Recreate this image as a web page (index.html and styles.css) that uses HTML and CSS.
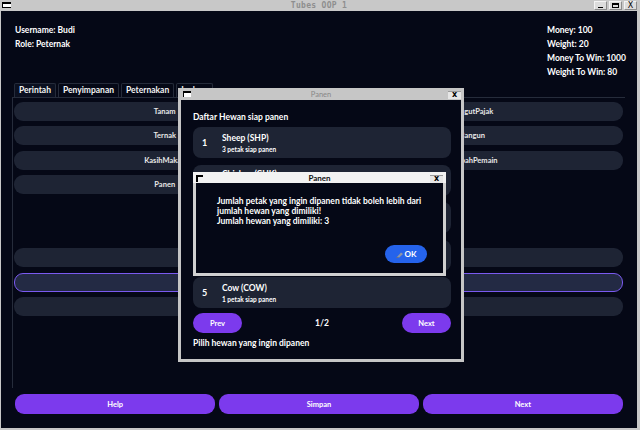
FILE: index.html
```html
<!DOCTYPE html>
<html>
<head>
<meta charset="utf-8">
<link rel="stylesheet" href="styles.css">
</head>
<body>
<div class="window">
  <div class="titlebar">
    <span class="wicon"></span>
    <span class="wtitle">Tubes OOP 1</span>
    <div class="wbtns">
      <span class="wb"><span class="g-min"></span></span>
      <span class="wb"><span class="g-max"></span></span>
      <span class="wb g-x">X</span>
    </div>
  </div>
  <div class="main">
    <header class="info">
      <div class="info-col">
        <div>Username: Budi</div>
        <div>Role: Peternak</div>
      </div>
      <div class="info-col">
        <div>Money: 100</div>
        <div>Weight: 20</div>
        <div>Money To Win: 1000</div>
        <div>Weight To Win: 80</div>
      </div>
    </header>
    <nav class="tabs">
      <div class="tab active">Perintah</div>
      <div class="tab">Penyimpanan</div>
      <div class="tab">Peternakan</div>
      <div class="tab">Ladang</div>
    </nav>
    <section class="panel">
      <div class="cmd c1 r1">Tanam</div>
      <div class="cmd c1 r2">Ternak</div>
      <div class="cmd c1 r3">KasihMakan</div>
      <div class="cmd c1 r4">Panen</div>
      <div class="cmd c2 r1">PungutPajak</div>
      <div class="cmd c2 r2">Bangun</div>
      <div class="cmd c2 r3">TambahPemain</div>
      <div class="cmd wide r7"></div>
      <div class="cmd wide r8 focus"></div>
      <div class="cmd wide r9"></div>
    </section>
    <footer class="actions">
      <button class="btn">Help</button>
      <button class="btn">Simpan</button>
      <button class="btn">Next</button>
    </footer>
  </div>

  <div class="dialog outer">
    <div class="dtitle">
      <span class="dicon"></span>
      <span>Panen</span>
      <span class="dclose">x</span>
    </div>
    <div class="dbody">
      <div class="dhead">Daftar Hewan siap panen</div>
      <div class="animals">
        <div class="animal"><span class="num">1</span><div><div class="aname">Sheep (SHP)</div><div class="asub">3 petak siap panen</div></div></div>
        <div class="animal top"><div class="aname peek">Chicken (CHK)</div></div>
        <div class="animal"></div>
        <div class="animal"></div>
        <div class="animal"><span class="num">5</span><div><div class="aname">Cow (COW)</div><div class="asub">1 petak siap panen</div></div></div>
      </div>
      <div class="pager">
        <button class="pbtn">Prev</button>
        <span>1/2</span>
        <button class="pbtn">Next</button>
      </div>
      <div class="hint">Pilih hewan yang ingin dipanen</div>
    </div>
  </div>

  <div class="dialog inner">
    <div class="ititle">
      <span class="icorner"></span>
      <span>Panen</span>
      <span class="iclose">x</span>
    </div>
    <div class="ibody">
      <p class="msg">Jumlah petak yang ingin dipanen tidak boleh lebih dari<br>jumlah hewan yang dimiliki!<br>Jumlah hewan yang dimiliki: 3</p>
      <div class="okrow">
        <button class="ok"><svg width="8" height="7" viewBox="0 0 8 7"><path d="M1 6 L5 1.5 L7 3 L3.2 6.5 Z" fill="#8d96a6"/><path d="M0.5 6.5 L2.5 6.5" stroke="#6b7280" stroke-width="1"/></svg>OK</button>
      </div>
    </div>
  </div>
</div>
</body>
</html>
```

FILE: styles.css
```css
* { box-sizing: border-box; }
html, body { margin: 0; padding: 0; }
body {
  background: #c8c8c8;
  font-family: Lato, "Noto Sans", "DejaVu Sans", sans-serif;
  color: #fff;
}
.window {
  position: relative;
  width: 640px;
  height: 430px;
  background: #c8c8c8;
  padding: 0 3px 2px 1px;
  display: flex;
  flex-direction: column;
}
.titlebar {
  height: 11px;
  position: relative;
  display: flex;
  align-items: center;
  justify-content: center;
}
.wicon {
  position: absolute;
  left: 1px;
  top: 2px;
  width: 9px;
  height: 6px;
  background: #fff;
  border-top: 2px solid #000;
  border-left: 1px solid #000;
  border-bottom: 1px solid #000;
}
.wtitle {
  font-family: "DejaVu Sans Mono", monospace;
  font-size: 8px;
  font-weight: bold;
  color: #8e8e8e;
  letter-spacing: 0.3px;
}
.wbtns {
  position: absolute;
  right: 0;
  top: 1px;
  display: flex;
  gap: 2px;
}
.wb {
  width: 13px;
  height: 9px;
  background: #dcdcdc;
  border: 1px solid;
  border-color: #f4f4f4 #8c8c8c #8c8c8c #f4f4f4;
  display: flex;
  align-items: center;
  justify-content: center;
  font-family: "DejaVu Sans", sans-serif;
  font-size: 8px;
  line-height: 1;
  color: #000;
}
.g-min { width: 5px; height: 1px; background: #000; margin-top: 4px; }
.g-max { width: 7px; height: 5px; border: 1px solid #000; border-top-width: 2px; }
.g-x { font-size: 8px; }

.main {
  flex: 1;
  background: #050816;
  display: flex;
  flex-direction: column;
  padding: 12px 12px 14px 11px;
}
.info {
  display: grid;
  grid-template-columns: 1fr 78px;
  padding-left: 3px;
  font-size: 8.5px;
  font-weight: bold;
  line-height: 14px;
  white-space: nowrap;
}
.tabs {
  margin-top: 4px;
  margin-left: 2px;
  display: flex;
  gap: 2px;
  height: 14px;
}
.tab {
  border: 1px solid #252b3a;
  border-bottom: none;
  border-radius: 2px 2px 0 0;
  padding: 0 4px;
  font-size: 8.5px;
  font-weight: bold;
  line-height: 13px;
  color: #f2f2f2;
}
.tab.active { background: #0b1020; }

.panel {
  flex: 1;
  border-top: 1px solid #262c3b;
  border-left: 1px solid #262c3b;
  padding: 4px 2px 0 1px;
  display: grid;
  grid-template-columns: 1fr 1fr;
  column-gap: 6px;
  grid-template-rows: repeat(9, 19px);
  row-gap: 5.4px;
  align-content: start;
}
.cmd {
  background: #1e2434;
  border-radius: 9px;
  font-size: 7.5px;
  font-weight: bold;
  color: #e8e8e8;
  display: flex;
  align-items: center;
  justify-content: center;
}
.c1 { grid-column: 1; }
.c2 { grid-column: 2; }
.wide { grid-column: 1 / 3; }
.r1 { grid-row: 1; } .r2 { grid-row: 2; } .r3 { grid-row: 3; } .r4 { grid-row: 4; }
.r7 { grid-row: 7; } .r8 { grid-row: 8; } .r9 { grid-row: 9; }
.cmd.focus { background: #232a44; border: 1px solid #7a5af0; }

.actions {
  margin: 6px 2px 0 3px;
  display: grid;
  grid-template-columns: 1fr 1fr 1fr;
  gap: 3.5px;
  height: 20px;
}
.btn, .pbtn {
  border: none;
  background: #7c3aed;
  color: #fff;
  font-family: inherit;
  font-size: 7.5px;
  font-weight: bold;
  border-radius: 9px;
  padding: 0;
}

.dialog { position: absolute; display: flex; flex-direction: column; }
.outer {
  left: 178px;
  top: 88px;
  width: 286px;
  height: 274px;
  background: #c6c6c6;
  padding: 0 3px 3px 3px;
}
.dtitle {
  height: 12px;
  position: relative;
  display: flex;
  align-items: center;
  justify-content: center;
  font-size: 7.5px;
  color: #888;
}
.dicon {
  position: absolute;
  left: 2px;
  top: 3px;
  width: 8px;
  height: 6px;
  background: #fff;
  border-top: 2px solid #000;
  border-left: 1px solid #000;
}
.dclose, .iclose {
  position: absolute;
  right: 0;
  top: 3px;
  width: 13px;
  height: 8px;
  background: #e6e6e6;
  border-top: 1px solid #9a9a9a;
  color: #000;
  font-family: "DejaVu Sans", sans-serif;
  font-size: 8px;
  font-weight: bold;
  line-height: 6px;
  text-align: center;
}
.dbody {
  flex: 1;
  background: #050816;
  padding: 12px 10px 0 12px;
  display: flex;
  flex-direction: column;
}
.dhead {
  font-size: 8.5px;
  font-weight: bold;
  line-height: 10px;
}
.animals {
  margin-top: 5px;
  display: flex;
  flex-direction: column;
  gap: 6.5px;
}
.animal {
  height: 31px;
  background: #1e2434;
  border-radius: 8px;
  display: flex;
  align-items: center;
  padding-left: 9px;
}
.animal.top { align-items: flex-start; padding: 4px 0 0 29px; }
.num {
  width: 20px;
  font-size: 9px;
  font-weight: bold;
}
.aname {
  font-size: 8.5px;
  font-weight: bold;
  line-height: 10px;
  margin-bottom: 3px;
}
.asub {
  font-size: 6.5px;
  font-weight: bold;
  line-height: 7px;
}
.pager {
  margin-top: 5px;
  height: 20px;
  display: flex;
  align-items: center;
  justify-content: space-between;
  font-size: 8.5px;
  font-weight: bold;
}
.pbtn { width: 49px; height: 20px; border-radius: 10px; }
.hint {
  margin-top: 5px;
  font-size: 8.5px;
  font-weight: bold;
  line-height: 10px;
}

.inner {
  left: 193px;
  top: 172px;
  width: 253px;
  height: 104px;
  background: #d0d0d0;
}
.ititle {
  height: 11px;
  background: #f2f2f2;
  position: relative;
  display: flex;
  align-items: center;
  justify-content: center;
  font-size: 8px;
  font-weight: bold;
  color: #111;
}
.icorner {
  position: absolute;
  left: 3px;
  top: 3px;
  width: 7px;
  height: 7px;
  border-top: 2px solid #000;
  border-left: 2px solid #000;
}
.iclose { right: 3px; top: 3px; height: 8px; }
.ibody {
  flex: 1;
  margin: 0 3px 3px;
  background: #050816;
  padding: 13px 16px 0 21px;
  display: flex;
  flex-direction: column;
}
.msg {
  margin: 0;
  font-size: 8.5px;
  font-weight: bold;
  line-height: 10px;
}
.okrow {
  margin-top: 19px;
  display: flex;
  justify-content: flex-end;
}
.ok {
  width: 42px;
  height: 18px;
  border: none;
  border-radius: 9px;
  background: #2563eb;
  color: #fff;
  font-family: inherit;
  font-size: 8px;
  font-weight: bold;
  display: flex;
  align-items: center;
  justify-content: center;
  gap: 1px;
  padding: 0;
}
```
